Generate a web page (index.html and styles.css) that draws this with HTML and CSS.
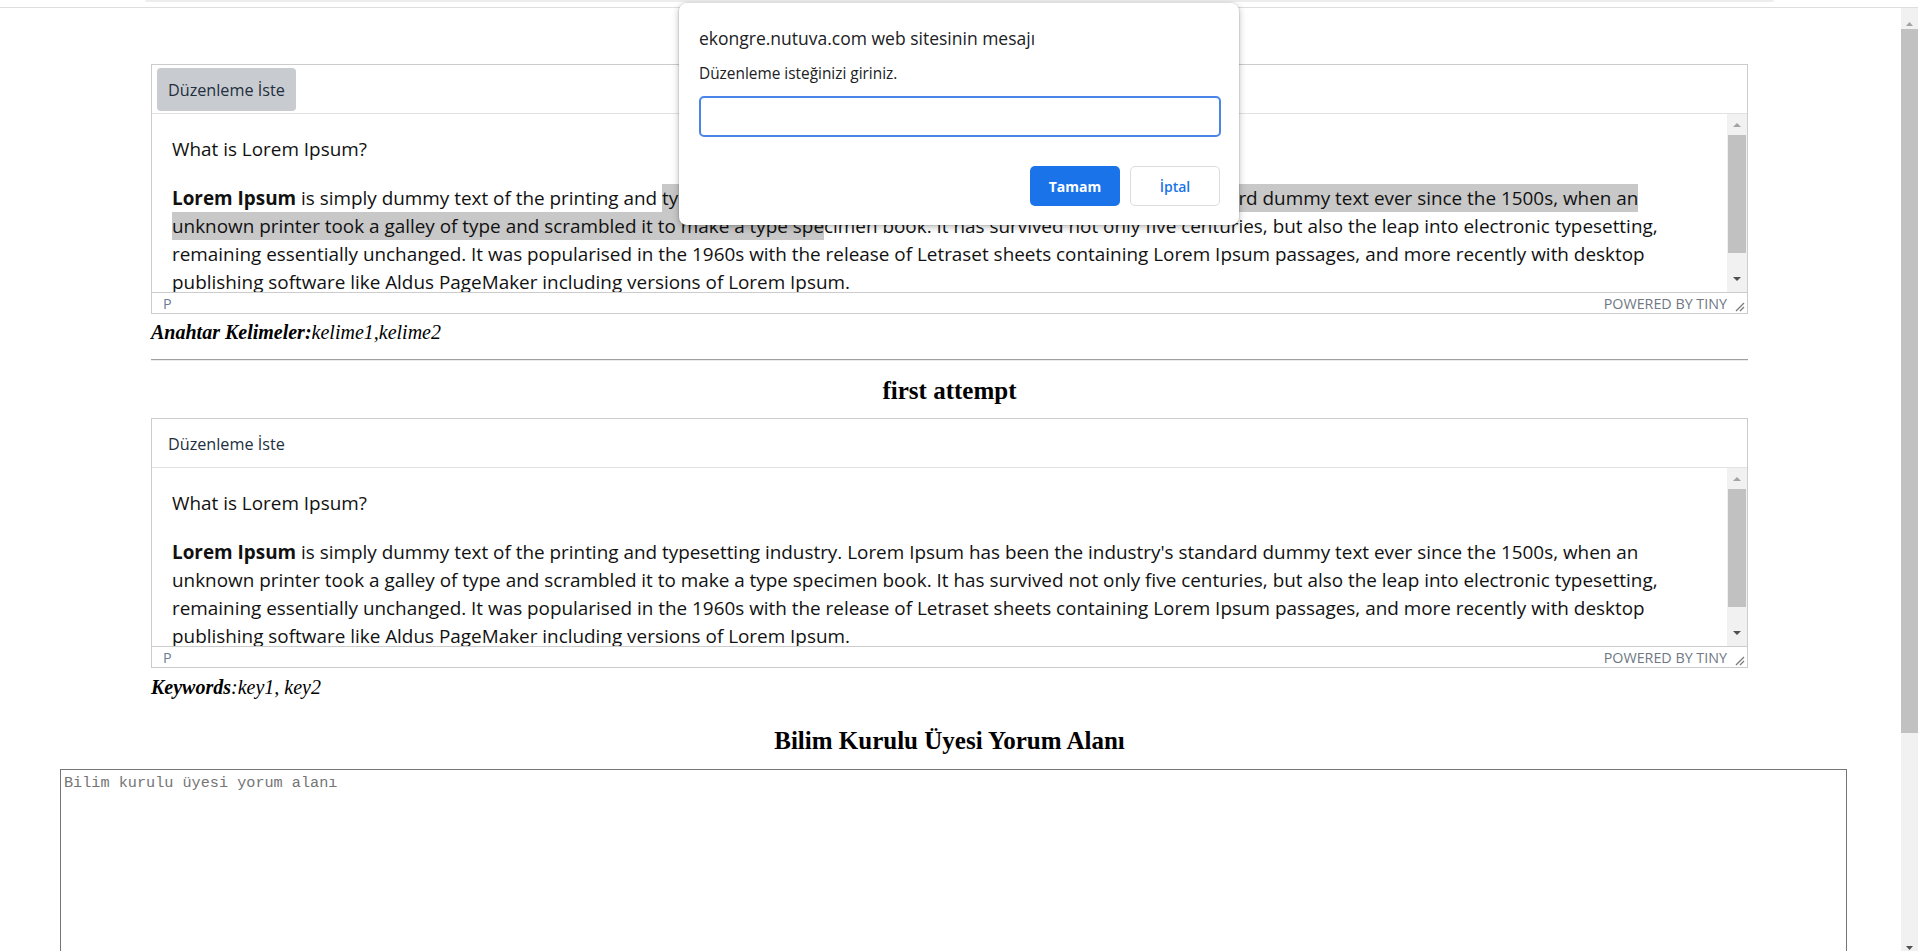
FILE: index.html
```html
<!DOCTYPE html>
<html lang="tr">
<head>
<meta charset="utf-8">
<title>Düzenleme</title>
<link rel="stylesheet" href="styles.css">
</head>
<body>
<div class="topbar"><div class="topbar-tab"></div></div>
<div class="viewport">
  <main class="page">
    <div class="container">
      <div class="editor">
        <div class="toolbar"><button class="tbtn active">Düzenleme İste</button></div>
        <div class="edit-area">
          <div class="content">
            <p>What is Lorem Ipsum?</p>
            <p><strong>Lorem Ipsum</strong> is simply dummy text of the printing and <span class="sel">typesetting industry. Lorem Ipsum has been the industry's standard dummy text ever since the 1500s, when an unknown printer took a galley of type and scrambled it to make a type spe</span>cimen book. It has survived not only five centuries, but also the leap into electronic typesetting, remaining essentially unchanged. It was popularised in the 1960s with the release of Letraset sheets containing Lorem Ipsum passages, and more recently with desktop publishing software like Aldus PageMaker including versions of Lorem Ipsum.</p>
          </div>
          <div class="escroll">
            <svg class="sb-btn" width="20" height="21" viewBox="0 0 20 21"><polygon points="6,13 14,13 10,9" fill="#a3a3a3"/></svg>
            <div class="ethumb"></div>
            <div class="sb-space"></div>
            <svg class="sb-btn" width="20" height="21" viewBox="0 0 20 21"><polygon points="6,6 14,6 10,10" fill="#505050"/></svg>
          </div>
        </div>
        <div class="statusbar">
          <span class="path">P</span>
          <span class="brand">POWERED BY TINY</span>
          <svg class="resize" width="11" height="10" viewBox="0 0 11 10"><path d="M10 1 L2 9 M10 5 L6 9" stroke="#7b7b7b" stroke-width="1.3" fill="none"/></svg>
        </div>
      </div>
      <div class="keywords kw1"><b><i>Anahtar Kelimeler:</i></b><i>kelime1,kelime2</i></div>
      <hr class="sep">
      <h2 class="title t1">first attempt</h2>
      <div class="editor e2">
        <div class="toolbar"><button class="tbtn">Düzenleme İste</button></div>
        <div class="edit-area">
          <div class="content">
            <p>What is Lorem Ipsum?</p>
            <p><strong>Lorem Ipsum</strong> is simply dummy text of the printing and typesetting industry. Lorem Ipsum has been the industry's standard dummy text ever since the 1500s, when an unknown printer took a galley of type and scrambled it to make a type specimen book. It has survived not only five centuries, but also the leap into electronic typesetting, remaining essentially unchanged. It was popularised in the 1960s with the release of Letraset sheets containing Lorem Ipsum passages, and more recently with desktop publishing software like Aldus PageMaker including versions of Lorem Ipsum.</p>
          </div>
          <div class="escroll">
            <svg class="sb-btn" width="20" height="21" viewBox="0 0 20 21"><polygon points="6,13 14,13 10,9" fill="#a3a3a3"/></svg>
            <div class="ethumb"></div>
            <div class="sb-space"></div>
            <svg class="sb-btn" width="20" height="21" viewBox="0 0 20 21"><polygon points="6,6 14,6 10,10" fill="#505050"/></svg>
          </div>
        </div>
        <div class="statusbar">
          <span class="path">P</span>
          <span class="brand">POWERED BY TINY</span>
          <svg class="resize" width="11" height="10" viewBox="0 0 11 10"><path d="M10 1 L2 9 M10 5 L6 9" stroke="#7b7b7b" stroke-width="1.3" fill="none"/></svg>
        </div>
      </div>
      <div class="keywords kw2"><b><i>Keywords</i></b><i>:key1, key2</i></div>
      <h2 class="title t2">Bilim Kurulu Üyesi Yorum Alanı</h2>
    </div>
    <textarea class="comment" placeholder="Bilim kurulu üyesi yorum alanı"></textarea>
  </main>
  <div class="vscroll">
    <svg class="sb-btn" width="17" height="21" viewBox="0 0 17 21"><polygon points="5,18 12,18 8.5,14" fill="#a3a3a3"/></svg>
    <div class="pthumb"></div>
    <div class="sb-space"></div>
    <svg class="sb-btn" width="17" height="13" viewBox="0 0 17 13"><polygon points="5,8 12,8 8.5,12" fill="#505050"/></svg>
  </div>
</div>

<div class="dialog">
  <div class="dlg-title">ekongre.nutuva.com web sitesinin mesajı</div>
  <div class="dlg-msg">Düzenleme isteğinizi giriniz.</div>
  <input class="dlg-input" type="text">
  <div class="dlg-actions">
    <button class="btn btn-primary">Tamam</button>
    <button class="btn btn-secondary">İptal</button>
  </div>
</div>
</body>
</html>
```

FILE: styles.css
```css
html, body {
  margin: 0;
  padding: 0;
}

body {
  height: 951px;
  overflow: hidden;
  display: flex;
  flex-direction: column;
  background: #fff;
  font-family: "Liberation Serif", "Times New Roman", serif;
  color: #000;
  position: relative;
}

/* top strip */
.topbar {
  height: 7px;
  border-bottom: 1px solid #dedede;
  flex: none;
}

.topbar-tab {
  margin-left: 145px;
  width: 1629px;
  height: 2px;
  background: #ededed;
  border-radius: 0 0 5px 5px;
}

.viewport {
  flex: 1;
  display: flex;
  min-height: 0;
}

.page {
  flex: 1;
  overflow: hidden;
}

.container {
  margin: 56px 153px 0 151px;
}

/* TinyMCE-like editor */
.editor {
  border: 1px solid #ccc;
  display: flex;
  flex-direction: column;
  background: #fff;
}

.e2 {
  margin-top: 13px;
}

.toolbar {
  box-sizing: border-box;
  height: 49px;
  padding: 3px 5px 0;
  border-bottom: 1px solid #e2e2e2;
}

.tbtn {
  height: 43px;
  padding: 0 11px;
  border: 0;
  border-radius: 4px;
  background: transparent;
  font-family: "Open Sans", sans-serif;
  font-size: 16.2px;
  color: #222f3e;
  cursor: pointer;
}

.tbtn.active {
  background: #c8cbcf;
}

.edit-area {
  height: 178px;
  display: flex;
}

.content {
  flex: 1;
  overflow: hidden;
  padding: 21px 20px 0;
  font-family: "Open Sans", sans-serif;
  font-size: 18.9px;
  line-height: 28px;
  color: #111;
}

.content p {
  margin: 0;
}

.content p + p {
  margin-top: 21px;
}

.sel {
  background: #c8c8c8;
  padding: 1.1px 0;
}

.escroll {
  width: 20px;
  background: #f1f1f1;
  display: flex;
  flex-direction: column;
}

.sb-btn {
  display: block;
  flex: none;
}

.ethumb {
  height: 118px;
  margin: 0 1px;
  background: #c1c1c1;
}

.sb-space {
  flex: 1;
}

.statusbar {
  height: 20px;
  border-top: 1px solid #ccc;
  display: flex;
  align-items: center;
  padding-left: 11px;
  font-family: "Open Sans", sans-serif;
  font-size: 14.3px;
  color: #6f7884;
}

.path {
  flex: 1;
  color: #6a7d98;
}

.brand {
  margin-right: 7px;
}

.resize {
  align-self: flex-end;
  margin: 0 2px 1px 0;
}

/* keywords & headings */
.keywords {
  margin-top: 7px;
  font-size: 20px;
  line-height: 23px;
}

.kw2 {
  margin-top: 8px;
}

.sep {
  margin: 15px 0 0;
  height: 0;
  border: 0;
  border-top: 1px solid #a0a0a0;
  border-bottom: 1px solid #ececec;
}

.title {
  margin: 16px 0 0;
  font-size: 25px;
  line-height: 28px;
  font-weight: bold;
  text-align: center;
}

.t2 {
  margin-top: 28px;
}

.comment {
  display: block;
  margin: 14px 0 0 60px;
  width: 1787px;
  height: 260px;
  box-sizing: border-box;
  border: 1px solid #767676;
  border-radius: 0;
  padding: 2.5px 3px;
  font-family: "Liberation Mono", monospace;
  font-size: 15.2px;
  line-height: 20px;
  resize: none;
  outline: none;
}

.comment::placeholder {
  color: #757575;
}

/* page scrollbar */
.vscroll {
  width: 17px;
  flex: none;
  background: #f1f1f1;
  display: flex;
  flex-direction: column;
}

.pthumb {
  height: 704px;
  background: #c1c1c1;
}

/* prompt dialog */
.dialog {
  position: absolute;
  left: 679px;
  top: 3px;
  width: 560px;
  height: 222px;
  box-sizing: border-box;
  padding: 23px 18px 0 20px;
  background: #fff;
  border-radius: 8px;
  box-shadow: 0 0 0 1px rgba(0, 0, 0, 0.07), 0 2px 7px rgba(0, 0, 0, 0.28);
  font-family: "Open Sans", sans-serif;
  color: #202124;
  display: flex;
  flex-direction: column;
}

.dlg-title {
  font-size: 17.5px;
  line-height: 24px;
}

.dlg-msg {
  margin-top: 13px;
  font-size: 15.4px;
  line-height: 21px;
}

.dlg-input {
  margin: 12px 0 0;
  width: 100%;
  height: 41px;
  box-sizing: border-box;
  border: 2px solid #4a86e8;
  border-radius: 5px;
  outline: none;
  padding: 0 8px;
  font-family: "Open Sans", sans-serif;
  font-size: 15px;
}

.dlg-actions {
  margin: 29px 1px 0 0;
  display: flex;
  justify-content: flex-end;
  gap: 10px;
}

.btn {
  width: 90px;
  height: 40px;
  box-sizing: border-box;
  border-radius: 5px;
  font-family: "Open Sans", sans-serif;
  font-size: 14px;
  font-weight: 700;
  cursor: pointer;
}

.btn-primary {
  background: #1a73e8;
  border: 0;
  color: #fff;
}

.btn-secondary {
  background: #fff;
  border: 1px solid #dadce0;
  color: #1a73e8;
  font-weight: 600;
}
```
